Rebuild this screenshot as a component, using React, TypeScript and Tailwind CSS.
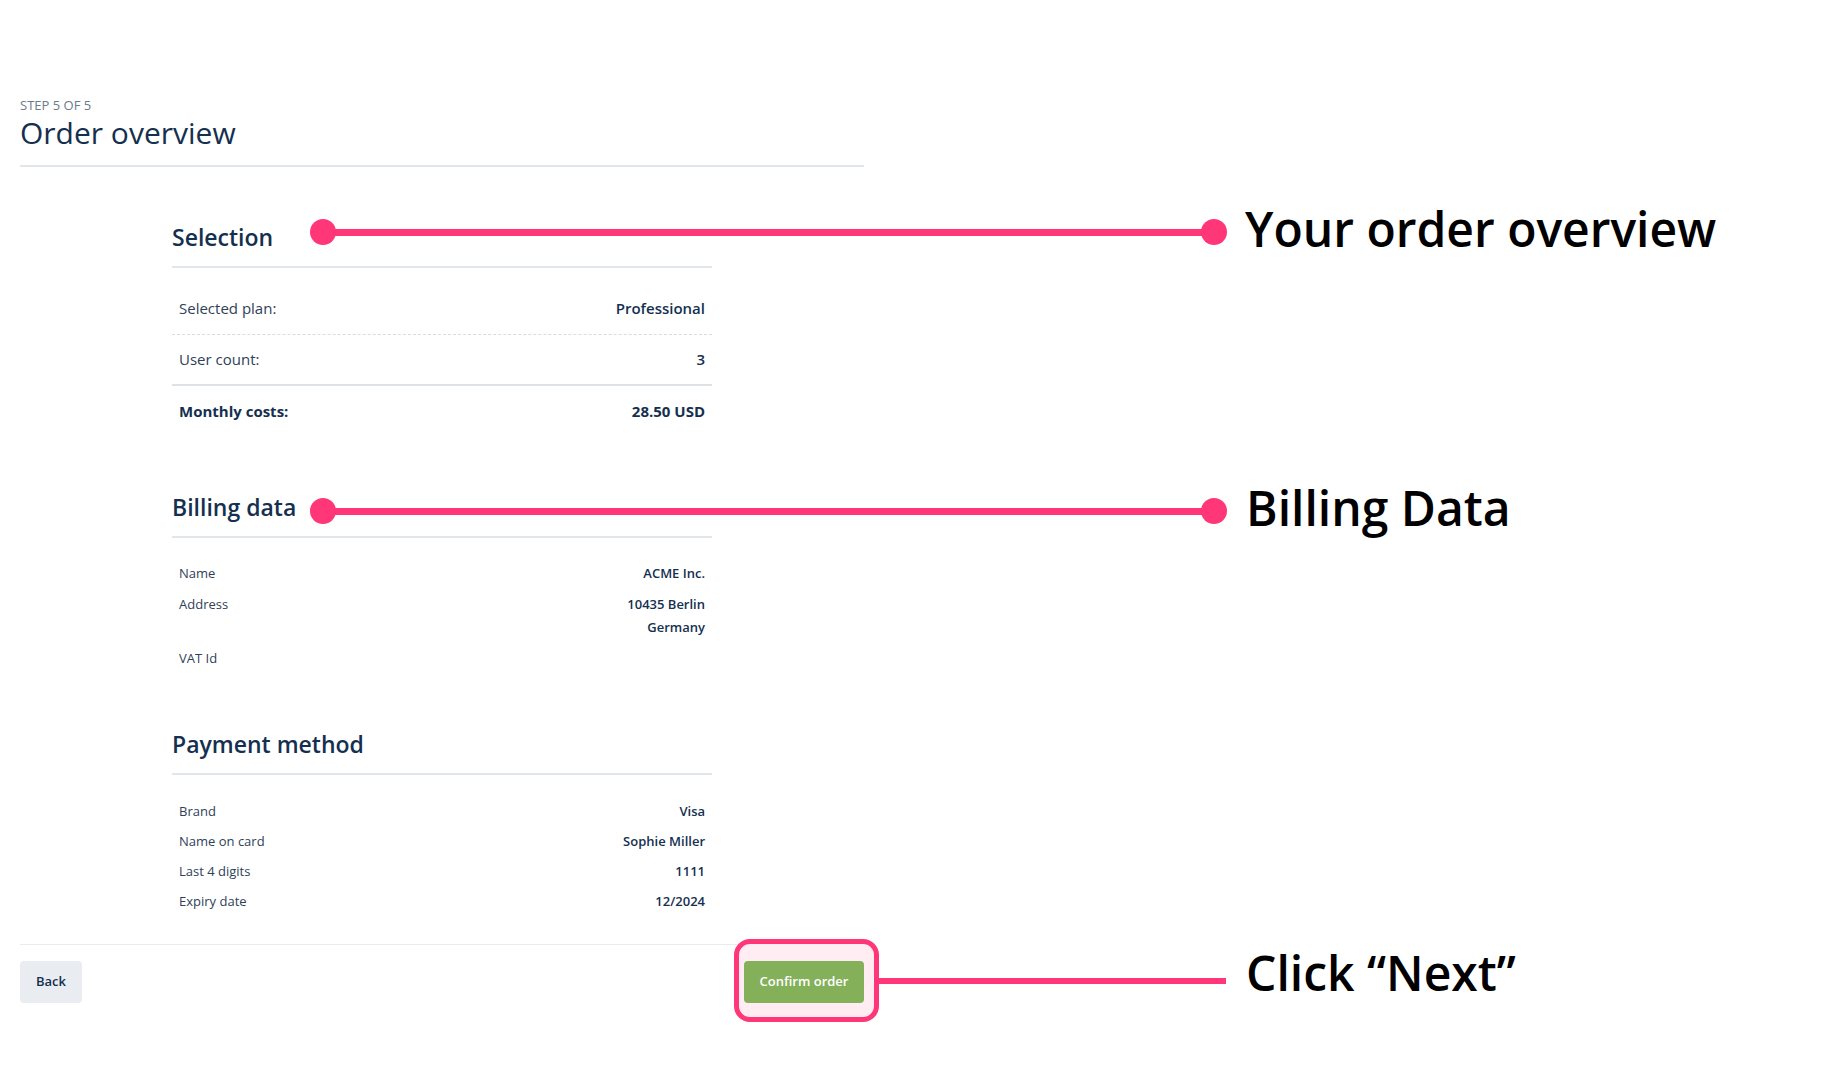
import React from 'react';

const selection = [
  { label: 'Selected plan:', value: 'Professional', border: 'h-[53px] border-b border-dashed border-[#d6dce2]' },
  { label: 'User count:', value: '3', border: 'h-[51px] border-b-2 border-[#dde2e7]' },
];

const billing = [
  { label: 'Name', value: ['ACME Inc.'] },
  { label: 'Address', value: ['10435 Berlin', 'Germany'] },
  { label: 'VAT Id', value: [] as string[] },
];

const payment = [
  { label: 'Brand', value: 'Visa' },
  { label: 'Name on card', value: 'Sophie Miller' },
  { label: 'Last 4 digits', value: '1111' },
  { label: 'Expiry date', value: '12/2024' },
];

function Heading({ children }: { children: React.ReactNode }) {
  return (
    <div className="border-b-2 border-[#e1e6ea] pb-[14px]">
      <h2 className="text-[23px] leading-[30px] font-semibold text-[#15304f]">{children}</h2>
    </div>
  );
}

function Callout({ top, left, width }: { top: number; left: number; width: number }) {
  return (
    <div className="absolute flex items-center" style={{ top, left }}>
      <div className="h-[26px] w-[26px] rounded-full bg-[#ff3677]" />
      <div className="-mx-[2px] h-[7px] bg-[#ff3677]" style={{ width }} />
      <div className="h-[26px] w-[26px] rounded-full bg-[#ff3677]" />
    </div>
  );
}

export default function App() {
  return (
    <div className="relative min-h-[1081px] w-full bg-white font-['Open_Sans',sans-serif] text-[#15304f]">
      <div className="w-[864px] pl-[20px] pt-[98px]">
        <div className="text-[13px] leading-[15px] text-[#6c7a8b]">STEP 5 OF 5</div>
        <h1 className="mt-[1px] text-[30px] leading-[38px] font-normal text-[#15304f]">Order overview</h1>
        <div className="mt-[13px] border-b-2 border-[#e1e6ea]" />

        <div className="ml-[152px] w-[540px]">
          <section className="mt-[55px]">
            <Heading>Selection</Heading>
            <div className="mt-[14px]">
              {selection.map((row) => (
                <div key={row.label} className={`flex items-center justify-between px-[7px] text-[15px] ${row.border}`}>
                  <span className="text-[#2f4158]">{row.label}</span>
                  <span className="font-semibold">{row.value}</span>
                </div>
              ))}
              <div className="flex h-[51px] items-center justify-between px-[7px] text-[15px] font-bold">
                <span>Monthly costs:</span>
                <span>28.50 USD</span>
              </div>
            </div>
          </section>

          <section className="mt-[55px]">
            <Heading>Billing data</Heading>
            <div className="mt-[24px] flex flex-col gap-[8px] px-[7px] text-[13px] leading-[23px]">
              {billing.map((row) => (
                <div key={row.label} className="flex justify-between">
                  <span className="text-[#2f4158]">{row.label}</span>
                  <div className="flex flex-col items-end font-semibold">
                    {row.value.map((v) => (
                      <span key={v}>{v}</span>
                    ))}
                  </div>
                </div>
              ))}
            </div>
          </section>

          <section className="mt-[59px]">
            <Heading>Payment method</Heading>
            <div className="mt-[25px] flex flex-col gap-[7px] px-[7px] text-[13px] leading-[23px]">
              {payment.map((row) => (
                <div key={row.label} className="flex justify-between">
                  <span className="text-[#2f4158]">{row.label}</span>
                  <span className="font-semibold">{row.value}</span>
                </div>
              ))}
            </div>
          </section>
        </div>

        <div className="mt-[31px] border-t border-[#e8ecef] pt-[16px]">
          <div className="flex items-center justify-between">
            <button className="h-[42px] w-[62px] rounded-[4px] bg-[#e9edf1] text-[13px] font-semibold text-[#15304f]">
              Back
            </button>
            <div className="relative">
              <div className="absolute -left-[10px] -top-[22px] h-[83px] w-[145px] rounded-[16px] border-[5px] border-[#ff3677] bg-[#ffedf3]" />
              <button className="relative h-[42px] w-[120px] rounded-[4px] bg-[#84b05a] text-[13px] font-semibold text-white">
                Confirm order
              </button>
            </div>
          </div>
        </div>
      </div>

      {/* annotations */}
      <Callout top={219} left={310} width={869} />
      <div className="absolute left-[1245px] top-[196px] text-[48px] leading-[66px] font-semibold text-black">Your order overview</div>

      <Callout top={498} left={310} width={869} />
      <div className="absolute left-[1246px] top-[475px] text-[48px] leading-[66px] font-semibold text-black">Billing Data</div>

      <div className="absolute left-[879px] top-[978px] h-[6px] w-[347px] bg-[#ff3677]" />
      <div className="absolute left-[1246px] top-[940px] text-[48px] leading-[66px] font-semibold text-black">Click “Next”</div>
    </div>
  );
}
